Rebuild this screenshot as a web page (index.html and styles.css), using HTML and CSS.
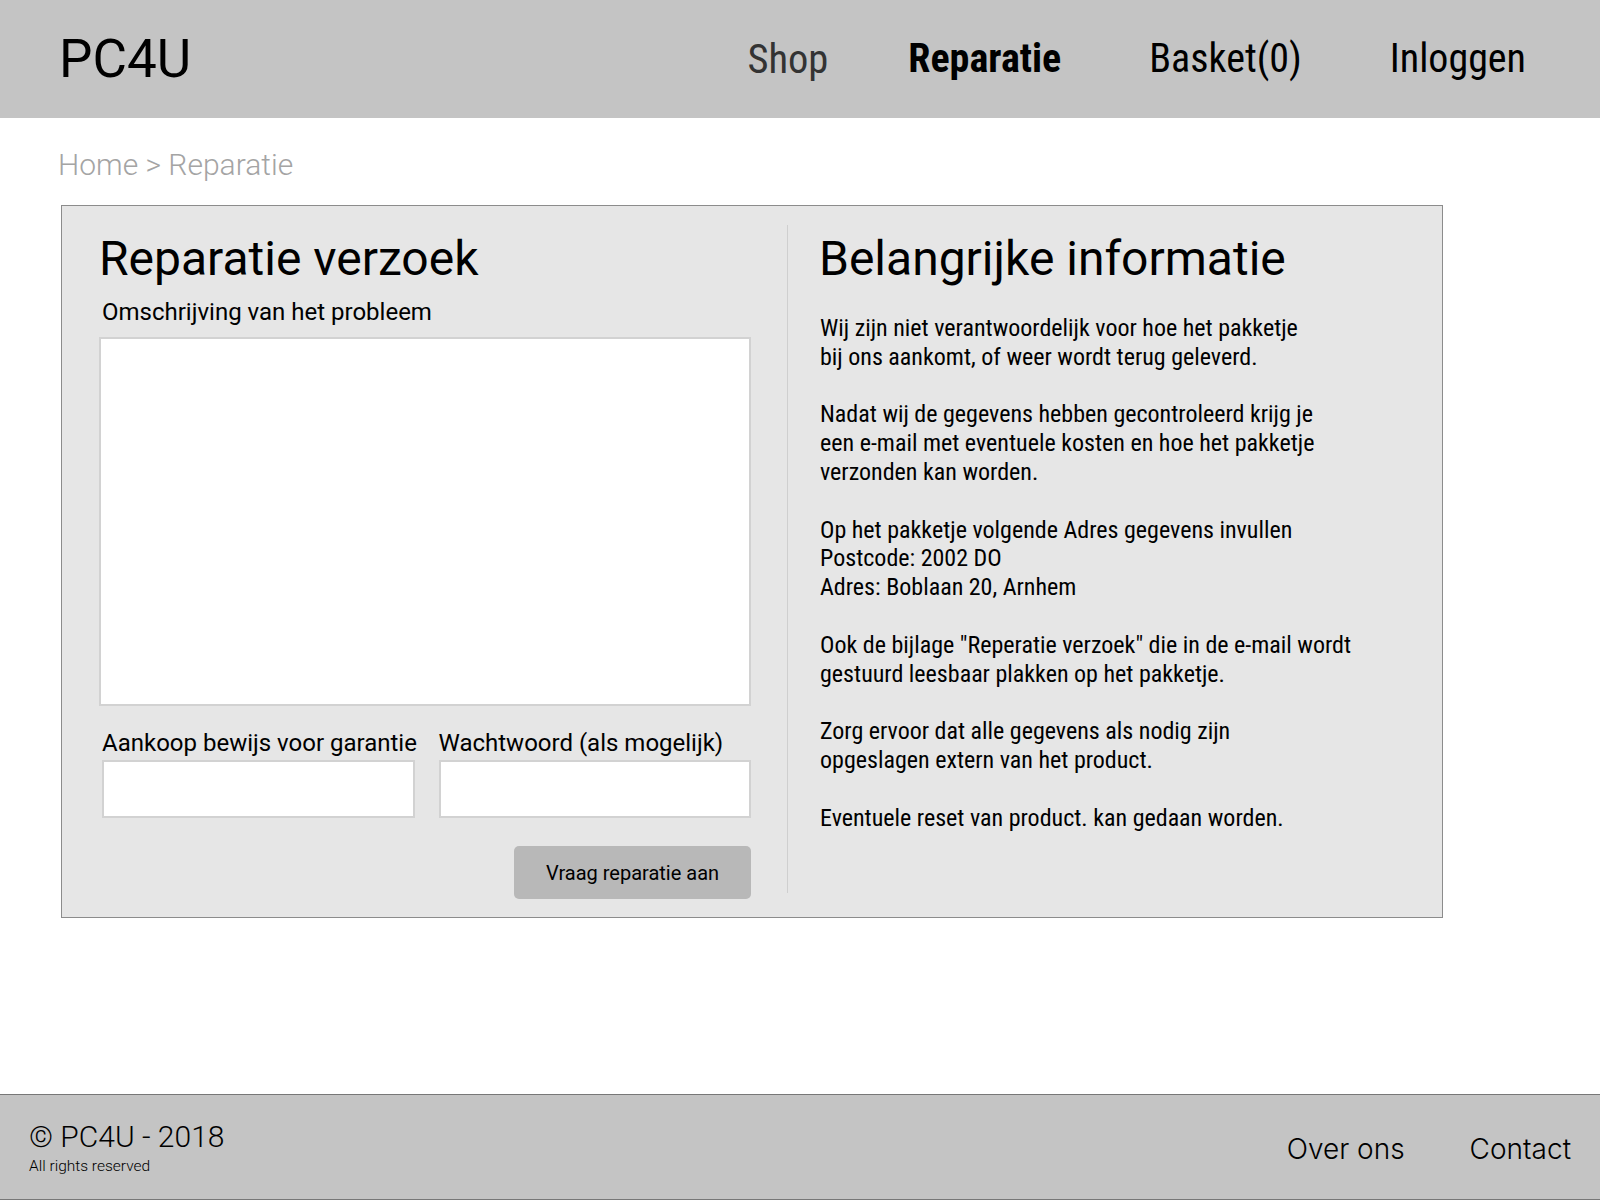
FILE: index.html
```html
<!DOCTYPE html>
<html lang="nl">
<head>
<meta charset="utf-8">
<title>PC4U - Reparatie</title>
<link rel="stylesheet" href="styles.css">
</head>
<body>
<header class="site-header">
  <div class="logo">PC4U</div>
  <nav class="main-nav">
    <a class="nav-link nav-shop" href="#">Shop</a>
    <a class="nav-link nav-active" href="#">Reparatie</a>
    <a class="nav-link" href="#">Basket(0)</a>
    <a class="nav-link" href="#">Inloggen</a>
  </nav>
</header>

<main class="page">
  <div class="breadcrumb">Home &gt; Reparatie</div>

  <section class="card">
    <form class="repair-form">
      <h1 class="card-title">Reparatie verzoek</h1>
      <label class="field-label" for="omschrijving">Omschrijving van het probleem</label>
      <textarea class="textarea" id="omschrijving"></textarea>
      <div class="field-row">
        <div class="field">
          <label class="field-label" for="bewijs">Aankoop bewijs voor garantie</label>
          <input class="input" id="bewijs" type="text">
        </div>
        <div class="field">
          <label class="field-label" for="wachtwoord">Wachtwoord (als mogelijk)</label>
          <input class="input" id="wachtwoord" type="text">
        </div>
      </div>
      <div class="actions">
        <button class="submit" type="button">Vraag reparatie aan</button>
      </div>
    </form>

    <div class="info">
      <h2 class="card-title">Belangrijke informatie</h2>
      <div class="info-text">Wij zijn niet verantwoordelijk voor hoe het pakketje
bij ons aankomt, of weer wordt terug geleverd.

Nadat wij de gegevens hebben gecontroleerd krijg je
een e-mail met eventuele kosten en hoe het pakketje
verzonden kan worden.

Op het pakketje volgende Adres gegevens invullen
Postcode: 2002 DO
Adres: Boblaan 20, Arnhem

Ook de bijlage "Reperatie verzoek" die in de e-mail wordt
gestuurd leesbaar plakken op het pakketje.

Zorg ervoor dat alle gegevens als nodig zijn
opgeslagen extern van het product.

Eventuele reset van product. kan gedaan worden.</div>
    </div>
  </section>
</main>

<footer class="site-footer">
  <div class="footer-left">
    <div class="copyright">© PC4U - 2018</div>
    <div class="rights">All rights reserved</div>
  </div>
  <nav class="footer-nav">
    <a class="footer-link" href="#">Over ons</a>
    <a class="footer-link" href="#">Contact</a>
  </nav>
</footer>
</body>
</html>
```

FILE: styles.css
```css
* {
  box-sizing: border-box;
}

html, body {
  margin: 0;
  padding: 0;
}

body {
  font-family: Roboto, "Liberation Sans", sans-serif;
  color: #000;
  background: #fff;
  min-height: 100vh;
  display: flex;
  flex-direction: column;
}

.site-header {
  height: 118px;
  background: #c4c4c4;
  display: flex;
  align-items: center;
  justify-content: space-between;
  padding: 0 74px 0 59px;
}

.logo {
  font-size: 53px;
  line-height: 1;
  color: #000;
}

.main-nav {
  display: flex;
  align-items: center;
  gap: 88px;
}

.nav-link {
  font-family: "Roboto Condensed", Roboto, sans-serif;
  font-size: 40px;
  line-height: 1;
  color: #000;
  text-decoration: none;
}

.nav-shop {
  color: #333;
  font-size: 40.5px;
  margin-right: -8px;
}

.nav-active {
  font-weight: 700;
}

.page {
  flex: 1;
  padding: 0 0 0 61px;
}

.breadcrumb {
  font-weight: 300;
  font-size: 30px;
  line-height: 34px;
  color: #a4a4a4;
  margin: 30px 0 0 -3px;
}

.card {
  margin-top: 23px;
  width: 1382px;
  background: #e6e6e6;
  border: 1px solid #8c8c8c;
  padding: 19px 0 18px 37px;
  display: flex;
  align-items: stretch;
}

.repair-form {
  width: 652px;
  display: flex;
  flex-direction: column;
}

.card-title {
  margin: 6px 0 0;
  font-size: 48px;
  font-weight: 400;
  line-height: 56px;
}

.field-label {
  display: block;
  font-size: 24px;
  line-height: 28px;
  padding-left: 3px;
  white-space: nowrap;
}

.repair-form > .field-label {
  margin-top: 11px;
}

.textarea {
  display: block;
  margin-top: 11px;
  width: 652px;
  height: 369px;
  border: 2px solid #d2d2d2;
  background: #fff;
  resize: none;
  font-family: inherit;
}

.field-row {
  display: flex;
  gap: 24px;
  margin-top: 23px;
  padding-left: 3px;
}

.field {
  flex: 1;
  min-width: 0;
}

.field-row .field-label {
  padding-left: 0;
}

.input {
  display: block;
  margin-top: 3px;
  width: 100%;
  height: 58px;
  border: 2px solid #d2d2d2;
  background: #fff;
  font-family: inherit;
}

.actions {
  display: flex;
  justify-content: flex-end;
  margin-top: 28px;
}

.submit {
  width: 237px;
  height: 53px;
  border: none;
  border-radius: 5px;
  background: #b8b8b8;
  font-family: Roboto, sans-serif;
  font-size: 20px;
  color: #000;
  padding: 0;
}

.info {
  margin-left: 36px;
  margin-bottom: 6px;
  border-left: 1px solid #cfcfcf;
  padding-left: 31px;
}

.info-text {
  margin-top: 27px;
  font-family: "Roboto Condensed", Roboto, sans-serif;
  font-size: 24px;
  line-height: 28.8px;
  white-space: pre-line;
  padding-left: 1px;
}

.site-footer {
  height: 106px;
  background: #c4c4c4;
  border-top: 1px solid #777;
  border-bottom: 1px solid #777;
  display: flex;
  justify-content: space-between;
  padding: 24px 29px 0 29px;
}

.copyright {
  font-weight: 300;
  font-size: 30px;
  line-height: 35px;
}

.rights {
  font-weight: 300;
  font-size: 15.5px;
  line-height: 18px;
  margin-top: 3px;
}

.footer-nav {
  display: flex;
  gap: 65px;
  padding-top: 13px;
}

.footer-link {
  font-family: Inter, "Liberation Sans", sans-serif;
  font-weight: 300;
  font-size: 28px;
  line-height: 34px;
  color: #000;
  text-decoration: none;
}
```
